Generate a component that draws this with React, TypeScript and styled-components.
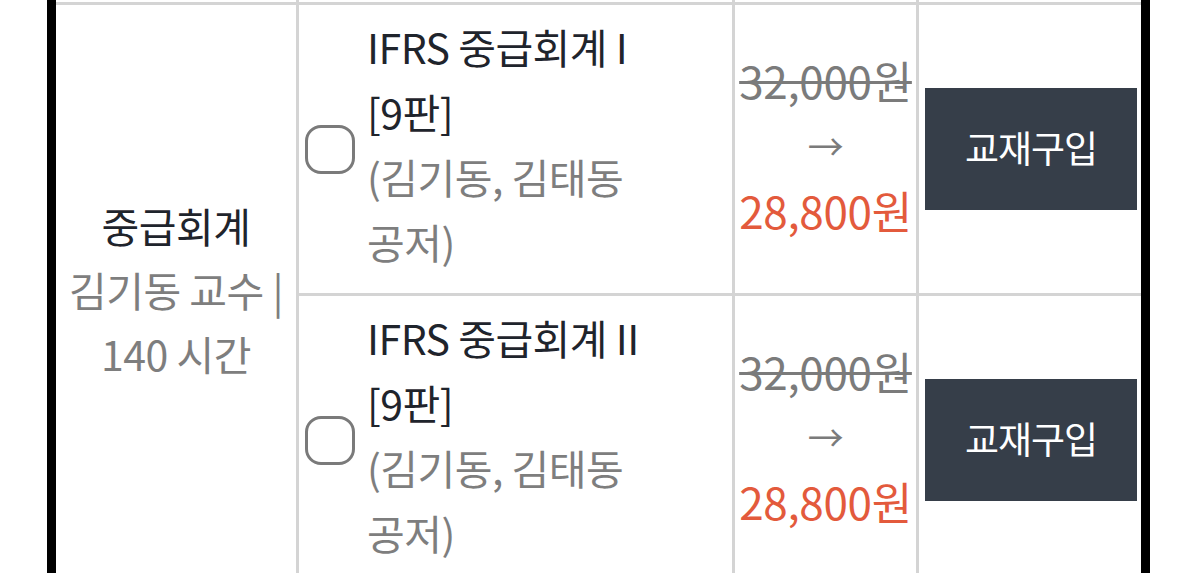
import React from "react";
import styled, { createGlobalStyle } from "styled-components";

const GlobalStyle = createGlobalStyle`
  html, body {
    margin: 0;
    padding: 0;
    background: #ffffff;
    overflow: hidden;
  }
  body {
    font-family: "Noto Sans CJK KR", "Noto Sans", sans-serif;
    word-break: keep-all;
  }
`;

const Page = styled.div`
  padding-left: 47px;
`;

const Frame = styled.div`
  box-sizing: border-box;
  width: 1103px;
  height: 600px;
  border-left: 9px solid #000;
  border-right: 9px solid #000;
`;

const Grid = styled.div`
  display: grid;
  grid-template-columns: 240px 433px 181px 222px;
  grid-template-rows: 2px 288px 288px;
  gap: 3px;
  background: #d4d4d4;
`;

const Cell = styled.div`
  background: #ffffff;
  min-width: 0;
`;

const SubjectCell = styled(Cell)`
  grid-row: 2 / span 2;
  display: flex;
  flex-direction: column;
  align-items: center;
  justify-content: center;
  text-align: center;
  box-sizing: border-box;
  padding: 0 4px 12px;
  font-size: 41px;
  line-height: 64px;
  letter-spacing: -0.5px;
`;

const SubjectTitle = styled.div`
  color: #1f242c;
`;

const SubjectMeta = styled.div`
  color: #7e7e7e;
`;

const BookCell = styled(Cell)`
  display: flex;
  align-items: center;
  gap: 12px;
  padding: 0 40px 0 6px;
`;

const CheckBox = styled.span`
  flex: none;
  box-sizing: border-box;
  width: 50px;
  height: 49px;
  border: 3.5px solid #7a7a7a;
  border-radius: 16px;
  background: #fff;
`;

const BookText = styled.div`
  padding-bottom: 10px;
  font-size: 41px;
  line-height: 65px;
  letter-spacing: -0.5px;
`;

const BookTitle = styled.span`
  display: block;
  color: #1f242c;
`;

const BookAuthor = styled.span`
  display: block;
  color: #7e7e7e;
`;

const PriceCell = styled(Cell)`
  display: flex;
  flex-direction: column;
  align-items: center;
  justify-content: center;
  padding-bottom: 8px;
  box-sizing: border-box;
  font-size: 44px;
  line-height: 65px;
  letter-spacing: -0.3px;
`;

const OldPrice = styled.div`
  color: #7b7b7b;
  text-decoration: line-through;
  text-decoration-thickness: 3px;
`;

const Arrow = styled.div`
  color: #7b7b7b;
  font-size: 36px;
`;

const NewPrice = styled.div`
  color: #e35a3c;
`;

const ActionCell = styled(Cell)`
  display: flex;
  align-items: center;
  justify-content: flex-end;
  padding-right: 4px;
`;

const BuyButton = styled.button`
  width: 212px;
  height: 122px;
  border: none;
  border-radius: 0;
  background: #363e49;
  color: #ffffff;
  font-family: "Noto Sans CJK KR", "Noto Sans", sans-serif;
  font-size: 37px;
  letter-spacing: -1px;
  padding: 0 0 4px;
  cursor: pointer;
`;

const books = [
  { title: "IFRS 중급회계 I [9판]", author: "(김기동, 김태동 공저)" },
  { title: "IFRS 중급회계 II [9판]", author: "(김기동, 김태동 공저)" },
];

export default function App() {
  return (
    <>
      <GlobalStyle />
      <Page>
        <Frame>
          <Grid>
            <Cell />
            <Cell />
            <Cell />
            <Cell />
            <SubjectCell>
              <SubjectTitle>중급회계</SubjectTitle>
              <SubjectMeta>김기동 교수 | 140 시간</SubjectMeta>
            </SubjectCell>
            {books.map((b, i) => (
              <React.Fragment key={i}>
                <BookCell style={{ gridColumn: 2 }}>
                  <CheckBox />
                  <BookText>
                    <BookTitle>{b.title}</BookTitle>
                    <BookAuthor>{b.author}</BookAuthor>
                  </BookText>
                </BookCell>
                <PriceCell>
                  <OldPrice>32,000원</OldPrice>
                  <Arrow>→</Arrow>
                  <NewPrice>28,800원</NewPrice>
                </PriceCell>
                <ActionCell>
                  <BuyButton>교재구입</BuyButton>
                </ActionCell>
              </React.Fragment>
            ))}
          </Grid>
        </Frame>
      </Page>
    </>
  );
}
